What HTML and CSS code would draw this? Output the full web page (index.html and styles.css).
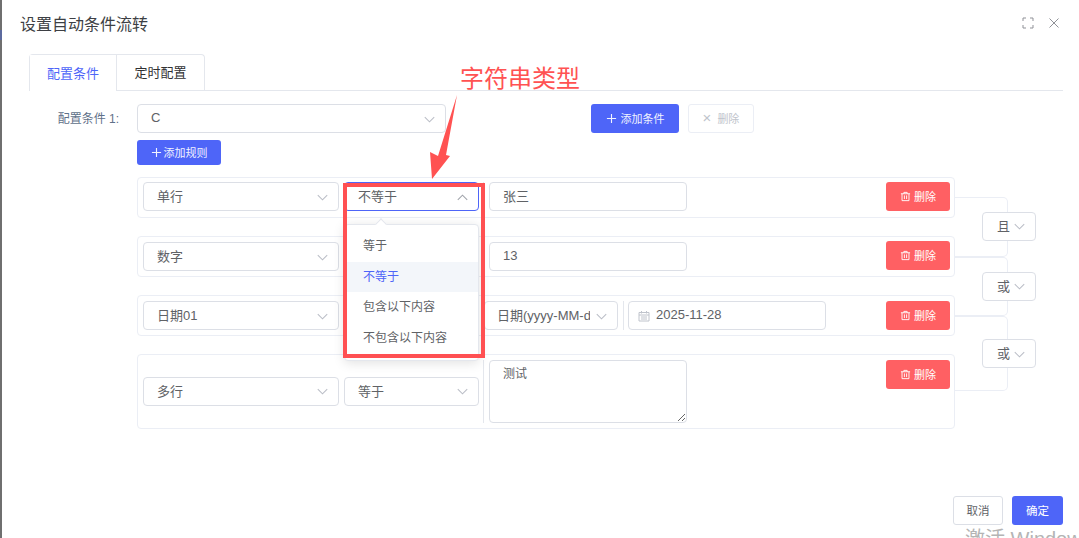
FILE: index.html
```html
<!DOCTYPE html>
<html lang="zh-CN">
<head>
<meta charset="utf-8">
<title>设置自动条件流转</title>
<link rel="stylesheet" href="styles.css">
</head>
<body>
<svg class="defs" aria-hidden="true">
  <symbol id="chev" viewBox="0 0 14 8"><path d="M1 1l6 6 6-6" fill="none" stroke="currentColor" stroke-width="1.3"/></symbol>
  <symbol id="plus" viewBox="0 0 12 12"><path d="M6 1v10M1 6h10" fill="none" stroke="currentColor" stroke-width="1.2"/></symbol>
  <symbol id="trash" viewBox="0 0 12 12"><path d="M1 3h10M4.2 3V1.5h3.6V3M2.2 3v7.5h7.6V3M4.8 4.8v4M7.2 4.8v4" fill="none" stroke="currentColor" stroke-width="1"/></symbol>
</svg>
<div class="page">
  <div class="edge"><span class="edge-mark"></span></div>
  <main class="dialog">
    <header class="dialog-head">
      <h1 class="dialog-title">设置自动条件流转</h1>
      <div class="head-icons">
        <svg class="icon-full" viewBox="0 0 12 12"><path d="M1 4V1h3M8 1h3v3M11 8v3H8M4 11H1V8" fill="none" stroke="currentColor" stroke-width="1"/></svg>
        <svg class="icon-close" viewBox="0 0 10 10"><path d="M.5.5l9 9M9.5.5l-9 9" fill="none" stroke="currentColor" stroke-width="1"/></svg>
      </div>
    </header>

    <nav class="tabs">
      <div class="tab-group">
        <span class="tab tab-active">配置条件</span>
        <span class="tab tab-second">定时配置</span>
      </div>
    </nav>

    <section class="form-row">
      <label class="form-label">配置条件 1:</label>
      <div class="select select-cond"><span class="select-text">C</span><svg class="chev"><use href="#chev"/></svg></div>
      <button class="btn btn-primary btn-add-cond"><svg class="btn-icon"><use href="#plus"/></svg>添加条件</button>
      <button class="btn btn-disabled"><span class="btn-x">×</span>删除</button>
    </section>

    <div class="add-rule-row">
      <button class="btn btn-primary btn-add-rule"><svg class="btn-icon"><use href="#plus"/></svg>添加规则</button>
    </div>

    <section class="rules">
      <div class="rule-list">
        <div class="rule">
          <div class="select select-type"><span class="select-text">单行</span><svg class="chev"><use href="#chev"/></svg></div>
          <div class="select select-op select-focus"><span class="select-text">不等于</span><svg class="chev chev-up"><use href="#chev"/></svg></div>
          <span class="divider"></span>
          <div class="input input-value">张三</div>
          <button class="btn btn-danger"><svg class="btn-icon"><use href="#trash"/></svg>删除</button>
        </div>
        <div class="rule rule-number">
          <div class="select select-type"><span class="select-text">数字</span><svg class="chev"><use href="#chev"/></svg></div>
          <div class="select select-op"></div>
          <span class="divider"></span>
          <div class="input input-value">13</div>
          <button class="btn btn-danger"><svg class="btn-icon"><use href="#trash"/></svg>删除</button>
        </div>
        <div class="rule rule-date">
          <div class="select select-type"><span class="select-text">日期01</span><svg class="chev"><use href="#chev"/></svg></div>
          <div class="select select-op"></div>
          <div class="select select-fmt"><span class="select-text">日期(yyyy-MM-dd)</span><svg class="chev"><use href="#chev"/></svg></div>
          <span class="divider"></span>
          <div class="input input-value input-date">
            <svg class="icon-cal" viewBox="0 0 12 12"><path d="M1 2.5h10v8.5H1zM1 5h10M3.5 1v2.5M8.5 1v2.5M3 7h6M3 9h6" fill="none" stroke="currentColor" stroke-width="1"/></svg>
            <span>2025-11-28</span>
          </div>
          <button class="btn btn-danger"><svg class="btn-icon"><use href="#trash"/></svg>删除</button>
        </div>
        <div class="rule rule-tall">
          <div class="select select-type"><span class="select-text">多行</span><svg class="chev"><use href="#chev"/></svg></div>
          <div class="select select-op"><span class="select-text">等于</span><svg class="chev"><use href="#chev"/></svg></div>
          <span class="divider"></span>
          <textarea class="textarea">测试</textarea>
          <button class="btn btn-danger"><svg class="btn-icon"><use href="#trash"/></svg>删除</button>
        </div>
      </div>
      <div class="links">
        <div class="link link-a"><div class="select select-link"><span class="select-text">且</span><svg class="chev"><use href="#chev"/></svg></div></div>
        <div class="link link-b"><div class="select select-link"><span class="select-text">或</span><svg class="chev"><use href="#chev"/></svg></div></div>
        <div class="link link-c"><div class="select select-link"><span class="select-text">或</span><svg class="chev"><use href="#chev"/></svg></div></div>
      </div>
    </section>

    <footer class="dialog-foot">
      <button class="btn btn-plain">取消</button>
      <button class="btn btn-primary btn-ok">确定</button>
    </footer>
  </main>

  <div class="popup">
    <span class="popup-caret"></span>
    <ul class="popup-list">
      <li class="popup-item">等于</li>
      <li class="popup-item popup-current">不等于</li>
      <li class="popup-item">包含以下内容</li>
      <li class="popup-item">不包含以下内容</li>
    </ul>
  </div>

  <div class="note-text">字符串类型</div>
  <svg class="note-arrow" viewBox="0 0 30 86"><polygon points="29,1 18,61 22,62 4,85 2,58 10,62" fill="#ff5252"/></svg>
  <div class="note-box"></div>
  <div class="watermark">激活 Windows</div>
</div>
</body>
</html>
```

FILE: styles.css
```css
* { box-sizing: border-box; }
html, body { margin: 0; padding: 0; height: 100%; overflow: hidden; background: #fff; }
body { font-family: "Liberation Sans", "Noto Sans CJK SC", sans-serif; color: #606266; }
.defs { display: none; }

.page { position: relative; display: flex; width: 1079px; height: 538px; overflow: hidden; }
.edge { width: 2px; background: #6f6f6f; flex: none; }
.edge-mark { display: block; height: 10px; margin-top: 30px; background: #5c6a9e; }
.dialog { flex: 1; display: flex; flex-direction: column; min-width: 0; }

.dialog-head { display: flex; align-items: center; justify-content: space-between; height: 48px; margin-bottom: 6px; padding: 0 20px 0 18px; }
.dialog-title { margin: 0 0 2px; font-size: 16px; font-weight: 400; color: #3d3f44; }
.head-icons { display: flex; align-items: center; gap: 15px; margin-top: -2px; }
.icon-full { width: 12px; height: 12px; color: #8f9197; }
.icon-close { width: 10px; height: 10px; color: #8f9197; }

.tabs { margin: 0 16px 0 27px; border-bottom: 1px solid #e4e7ed; height: 37px; }
.tab-group { display: inline-flex; height: 37px; border: 1px solid #e4e7ed; border-bottom: 0; border-radius: 4px 4px 0 0; }
.tab { display: flex; align-items: center; justify-content: center; padding-bottom: 3px; font-size: 13px; color: #303133; }
.tab-second { width: 88px; border-left: 1px solid #e4e7ed; }
.tab-active { background: #fff; color: #4e65f8; height: 37px; width: 86px; }

.form-row { display: flex; align-items: center; margin: 13px 0 0 27px; }
.form-label { width: 108px; padding: 0 18px 3px 0; text-align: right; font-size: 12px; color: #5f7189; }

.select { display: flex; align-items: center; justify-content: space-between; height: 29px; padding: 0 10px 0 13px; background: #fff; border: 1px solid #dcdfe6; border-radius: 4px; font-size: 13px; color: #606266; flex: none; }
.select-text { overflow: hidden; white-space: nowrap; flex: 1; min-width: 0; padding-bottom: 2px; }
.chev { width: 11px; height: 7px; margin-left: 5px; margin-top: 1px; color: #babdc6; flex: none; }
.chev-up { transform: rotate(180deg); color: #a0a3ab; }
.select-cond { width: 309px; }
.select-type { width: 196px; }
.select-op { width: 135px; }
.select-fmt { width: 134px; padding-left: 13px; }
.select-fmt .select-text { margin-left: -1px; }
.select-fmt .chev { margin-left: 6px; }
.select-focus { border-color: #4e65f8; }
.select-link { width: 54px; padding: 0 10px 0 14px; }
.select-link .select-text { flex: none; }
.select-link .chev { margin-left: 0; }

.btn { display: inline-flex; align-items: center; justify-content: center; height: 29px; padding: 0 0 2px; border: 1px solid transparent; border-radius: 3px; font: inherit; font-size: 11px; background: none; flex: none; }
.btn-icon { width: 11px; height: 11px; margin: 2px 4px 0 0; flex: none; }
.btn-primary { background: #4e65f8; color: #f1f3ff; }
.btn-add-cond { width: 88px; margin-left: 145px; }
.btn-disabled { width: 66px; margin-left: 9px; border-color: #ebeef5; color: #c0c4cc; }
.btn-x { font-size: 15px; line-height: 1; margin-right: 6px; }
.add-rule-row { margin: 7px 0 0 135px; }
.btn-add-rule { width: 84px; height: 25px; }
.btn-add-rule .btn-icon { margin-right: 2px; }
.btn-danger { width: 64px; margin-left: auto; background: #ff6063; color: #fff; }
.btn-danger .btn-icon { margin-right: 3px; }
.btn-plain { width: 50px; border-color: #dcdfe6; color: #606266; font-size: 11.5px; background: #fff; }
.btn-ok { width: 51px; font-size: 11.5px; color: #fff; }

.rules { display: flex; margin: 12px 0 0 135px; }
.rule-list { display: flex; flex-direction: column; gap: 18px; width: 818px; flex: none; }
.rule { display: flex; align-items: flex-start; height: 41px; padding: 4px 4px 6px 5px; border: 1px solid #ebeef5; border-radius: 4px; }
.rule > .select-op { margin-left: 5px; }
.rule > .divider { width: 1px; height: 29px; margin: 0 5px 0 4px; background: #e4e7ed; flex: none; }
.rule-number > .select, .rule-number > .input { margin-top: 1px; }
.rule-date { padding: 5px 4px 5px 5px; }
.rule-date > .select-fmt { margin-left: 5px; }
.rule-date > .divider { margin-left: 5px; margin-right: 4px; }
.input { display: flex; align-items: center; height: 29px; padding: 0 13px 2px; border: 1px solid #dcdfe6; border-radius: 4px; font-size: 13px; color: #606266; flex: none; }
.input-value { width: 198px; }
.input-date { padding-left: 9px; }
.icon-cal { width: 12px; height: 12px; margin: 2px 6px 0 0; color: #c0c4cc; flex: none; }
.rule-tall { height: 75px; align-items: center; padding: 5px 4px 5px 5px; }
.rule-tall > .divider { height: 63px; }
.rule-tall > .select { margin-bottom: 1px; }
.rule-tall > .btn-danger { align-self: flex-start; }
.textarea { display: block; width: 198px; height: 63px; padding: 3px 13px; margin: 0; border: 1px solid #dcdfe6; border-radius: 4px; font: inherit; font-size: 12px; color: #606266; outline: none; flex: none; }

.links { display: flex; flex-direction: column; width: 53px; margin-top: 20px; flex: none; }
.link { display: flex; align-items: center; justify-content: flex-end; border: 1px solid #ebeef5; border-left: 0; border-radius: 0 5px 5px 0; }
.link .select-link { margin-right: -29px; }
.link-a { height: 60px; padding-bottom: 2px; }
.link-b { height: 59px; padding-bottom: 1px; }
.link-c { height: 75px; }

.dialog-foot { display: flex; justify-content: flex-end; gap: 9px; margin-top: auto; padding: 0 16px 13px 0; }

.popup { position: absolute; left: 344px; top: 224px; width: 135px; height: 137px; background: #fff; border: 1px solid #e4e7ed; border-radius: 4px; box-shadow: 0 2px 12px rgba(0, 0, 0, .12); }
.popup-caret { position: absolute; left: 32px; top: -5px; width: 8px; height: 8px; background: #fff; border-left: 1px solid #e4e7ed; border-top: 1px solid #e4e7ed; transform: rotate(45deg); }
.popup-list { position: relative; margin: 0; padding: 6px 0 0; list-style: none; }
.popup-item { display: flex; align-items: center; height: 30.5px; padding: 0 0 3px 18px; font-size: 12px; color: #606266; }
.popup-current { background: #f3f6fa; color: #4e65f8; }

.note-text { position: absolute; left: 460px; top: 62px; font-size: 24px; line-height: 34px; color: #ff5252; }
.note-arrow { position: absolute; left: 428px; top: 94px; width: 30px; height: 86px; }
.note-box { position: absolute; left: 343px; top: 183px; width: 142px; height: 175px; border: 4px solid #ff5052; }
.watermark { position: absolute; left: 965px; top: 525px; font-size: 20px; line-height: 28px; color: #b4b4b4; white-space: nowrap; }
```
